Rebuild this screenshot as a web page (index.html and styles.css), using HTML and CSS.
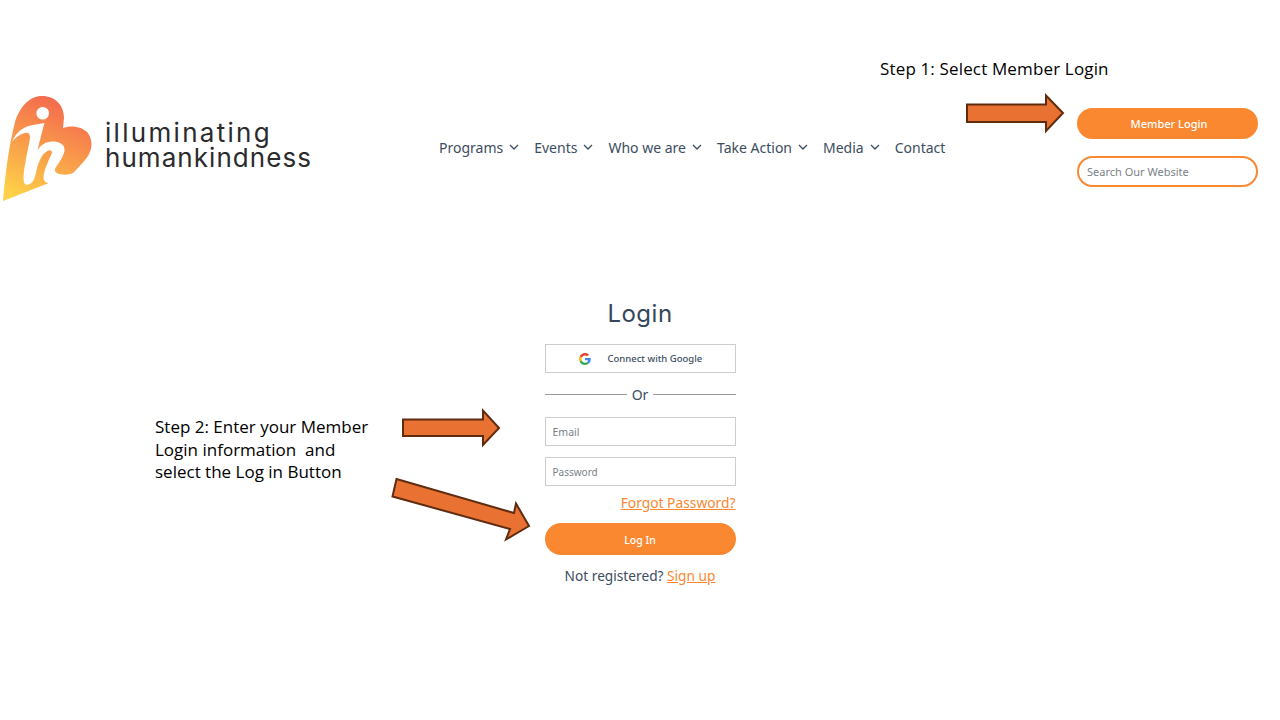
FILE: index.html
```html
<!DOCTYPE html>
<html lang="en">
<head>
    <meta charset="UTF-8">
    <meta name="viewport" content="width=device-width, initial-scale=1.0">
    <title>Member Login Steps</title>
    <link rel="stylesheet" href="styles.css">
</head>
<body>
    <div class="page">
        <div class="header">
            <div class="logo">
                <svg class="logo-mark" width="96" height="108" viewBox="0 94 96 108">
                    <defs>
                        <linearGradient id="heart" x1="55" y1="95" x2="15" y2="195" gradientUnits="userSpaceOnUse">
                            <stop offset="0" stop-color="#f4674f"/>
                            <stop offset="0.55" stop-color="#f9a04a"/>
                            <stop offset="1" stop-color="#fed148"/>
                        </linearGradient>
                    </defs>
                    <path fill="url(#heart)" d="M3,201 C5,175 9,145 15,122 C20,106 30,96 42,96 C55,96 64,105 64,118 L63,128 C70,125 82,126 88,133 C94,142 92,152 85,160 C80,166 76,170 72,174 Z"/>
                    <circle cx="42.700" cy="113.300" r="6.300" fill="#fff"/>
                    <path fill="#fff" d="M12,142 C15,133 24,126 33,125 L44.500,123 C42,131 39,145 37.500,150 C41,145 46,141.500 52,141.500 C60,141.500 65,144 64.500,151 C63,158 57,165 55,169 C54.500,173 58,174 62,174.500 C67,175 71,174 75,172.500 C70,177.500 60,181 52,183 C47,184 43.500,182 43.500,177 C44,170 50,157 52,153 C52,150.500 50,149.500 47.500,151 C42,154 39.500,160 37,168 C36,173 35,178 33,181 C30,185 26,186 24.500,183.500 C22.500,179 24,170 25.500,162 C26.500,155 29,145 30,138 C30.500,134 28,132 25,133 C20,134 15,138 12,142 Z"/>
                </svg>
                <div class="wordmark">
                    <span class="word-top">illuminating</span>
                    <span>humankindness</span>
                </div>
            </div>
            <ul class="nav">
                <li>Programs <svg class="chev" viewBox="0 0 10 6"><path d="M1 1l4 4 4-4"/></svg></li>
                <li>Events <svg class="chev" viewBox="0 0 10 6"><path d="M1 1l4 4 4-4"/></svg></li>
                <li>Who we are <svg class="chev" viewBox="0 0 10 6"><path d="M1 1l4 4 4-4"/></svg></li>
                <li>Take Action <svg class="chev" viewBox="0 0 10 6"><path d="M1 1l4 4 4-4"/></svg></li>
                <li>Media <svg class="chev" viewBox="0 0 10 6"><path d="M1 1l4 4 4-4"/></svg></li>
                <li>Contact</li>
            </ul>
            <div class="actions">
                <button class="pill">Member Login</button>
                <div class="search">Search Our Website</div>
            </div>
        </div>

        <div class="login">
            <h1>Login</h1>
            <div class="field google">
                <svg width="12" height="12" viewBox="0 0 48 48">
                    <path fill="#ea4335" d="M24 9.500c3.500 0 6.700 1.200 9.200 3.600l6.900-6.900C35.900 2.400 30.500 0 24 0 14.600 0 6.500 5.400 2.600 13.200l8 6.200C12.500 13.600 17.800 9.500 24 9.500z"/>
                    <path fill="#4285f4" d="M47 24.500c0-1.600-.1-3.100-.4-4.500H24v9h12.900c-.6 3-2.200 5.500-4.700 7.200l7.700 6C44.400 37.900 47 31.800 47 24.500z"/>
                    <path fill="#fbbc05" d="M10.600 28.600c-.5-1.500-.8-3-.8-4.600s.3-3.200.8-4.600l-8-6.200C.9 16.500 0 20.100 0 24s.9 7.500 2.600 10.800l8-6.200z"/>
                    <path fill="#34a853" d="M24 48c6.500 0 11.900-2.100 15.900-5.800l-7.700-6c-2.200 1.500-4.900 2.300-8.200 2.300-6.200 0-11.500-4.100-13.400-9.900l-8 6.200C6.500 42.600 14.600 48 24 48z"/>
                </svg>
                <span>Connect with Google</span>
            </div>
            <div class="divider"><span>Or</span></div>
            <div class="field input">Email</div>
            <div class="field input">Password</div>
            <a class="forgot">Forgot Password?</a>
            <button class="pill">Log In</button>
            <p class="signup">Not registered? <a>Sign up</a></p>
        </div>

        <!-- slide annotations on top of the screenshots -->
        <div class="note note-one">Step 1: Select Member Login</div>
        <div class="note note-two">Step 2: Enter your Member<br>Login information&nbsp; and<br>select the Log in Button</div>
        <svg class="arrows" width="1280" height="720" viewBox="0 0 1280 720">
            <path d="M967,104.500 H1046 V95.500 L1063,113 L1046,131 V122 H967 Z"/>
            <path d="M403,419.500 H483 V410.500 L499,428 L483,445 V436 H403 Z"/>
            <path d="M396.500,479 L514,513 L516,503.500 L529,526 L506,539.500 L510,529 L392.500,496.500 Z"/>
        </svg>
    </div>
</body>
</html>
```

FILE: styles.css
```css
body {
    margin: 0;
    background: #fff;
    font-family: "Noto Sans", Arial, sans-serif;
    color: #3c4d60;
}
.page {
    position: relative;
    width: 1280px;
    height: 720px;
    overflow: hidden;
}
.header {
    display: flex;
    align-items: center;
    height: 106px;
    padding-top: 94px;
}
.logo {
    display: flex;
    align-items: center;
    width: 439px;
    margin-top: 2px;
    flex: none;
}
.logo-mark {
    flex: none;
}
.wordmark {
    display: flex;
    flex-direction: column;
    margin: -7px 0 0 9px;
    font-family: Inter, Arial, sans-serif;
    font-size: 26px;
    line-height: 25px;
    letter-spacing: 1.05px;
    color: #2b2b2e;
}
.word-top {
    letter-spacing: 2.3px;
}
.nav {
    display: flex;
    gap: 15px;
    list-style: none;
    margin: 0;
    padding: 0;
    width: 638px;
    flex: none;
    font-size: 14px;
}
.nav li {
    display: flex;
    align-items: center;
    gap: 6px;
    white-space: nowrap;
}
.chev {
    width: 10px;
    height: 6px;
    fill: none;
    stroke: #3c4d60;
    stroke-width: 1.3;
}
.actions {
    display: flex;
    flex-direction: column;
    gap: 17px;
    width: 181px;
}
.pill {
    display: block;
    width: 100%;
    height: 31px;
    padding: 0 0 0 3px;
    border: none;
    border-radius: 16px;
    background: #fa8831;
    color: #fff;
    font-family: "Noto Sans", Arial, sans-serif;
    font-size: 11px;
    font-weight: 500;
}
.search {
    box-sizing: border-box;
    height: 31px;
    padding: 0 8px;
    border: 2px solid #fa8831;
    border-radius: 16px;
    font-size: 11px;
    line-height: 27px;
    color: #7a7f87;
}
.login {
    display: flex;
    flex-direction: column;
    width: 191px;
    margin: 98px auto 0;
}
.login h1 {
    margin: 0 0 15px;
    font-family: Inter, Arial, sans-serif;
    font-size: 24px;
    font-weight: 400;
    line-height: 31px;
    letter-spacing: 0.5px;
    text-align: center;
    color: #34475a;
}
.field {
    box-sizing: border-box;
    height: 29px;
    border: 1px solid #cdcdcd;
    font-size: 10.5px;
}
.google {
    display: flex;
    align-items: center;
    gap: 17px;
    padding-left: 33px;
    font-size: 9.5px;
    font-weight: 500;
}
.divider {
    display: flex;
    align-items: center;
    gap: 5px;
    height: 42px;
    padding-bottom: 2px;
    font-size: 14px;
}
.divider::before,
.divider::after {
    content: "";
    flex: 1;
    border-top: 1px solid #9a9a9a;
}
.input {
    padding-left: 7px;
    line-height: 28px;
    color: #7a7f87;
    margin-bottom: 11px;
}
.input + .input {
    font-size: 10px;
}
.forgot {
    align-self: flex-end;
    margin: -4px 0 10px;
    font-size: 13.8px;
    line-height: 20px;
    color: #fa8831;
    text-decoration: underline;
}
.login .pill {
    height: 32px;
    padding: 1px 0 0;
    font-size: 10.5px;
}
.signup {
    margin: 11px 0 0;
    font-size: 13.7px;
    line-height: 20px;
    text-align: center;
}
.signup a {
    color: #fa8831;
    text-decoration: underline;
}
.note {
    position: absolute;
    font-family: "Open Sans", Arial, sans-serif;
    font-size: 17px;
    line-height: 22.5px;
    color: #000;
}
.note-one {
    left: 880px;
    top: 58px;
    letter-spacing: 0.15px;
}
.note-two {
    left: 155px;
    top: 416px;
}
.arrows {
    position: absolute;
    left: 0;
    top: 0;
    fill: #e97132;
    stroke: #5f2c10;
    stroke-width: 2;
    pointer-events: none;
}
```
